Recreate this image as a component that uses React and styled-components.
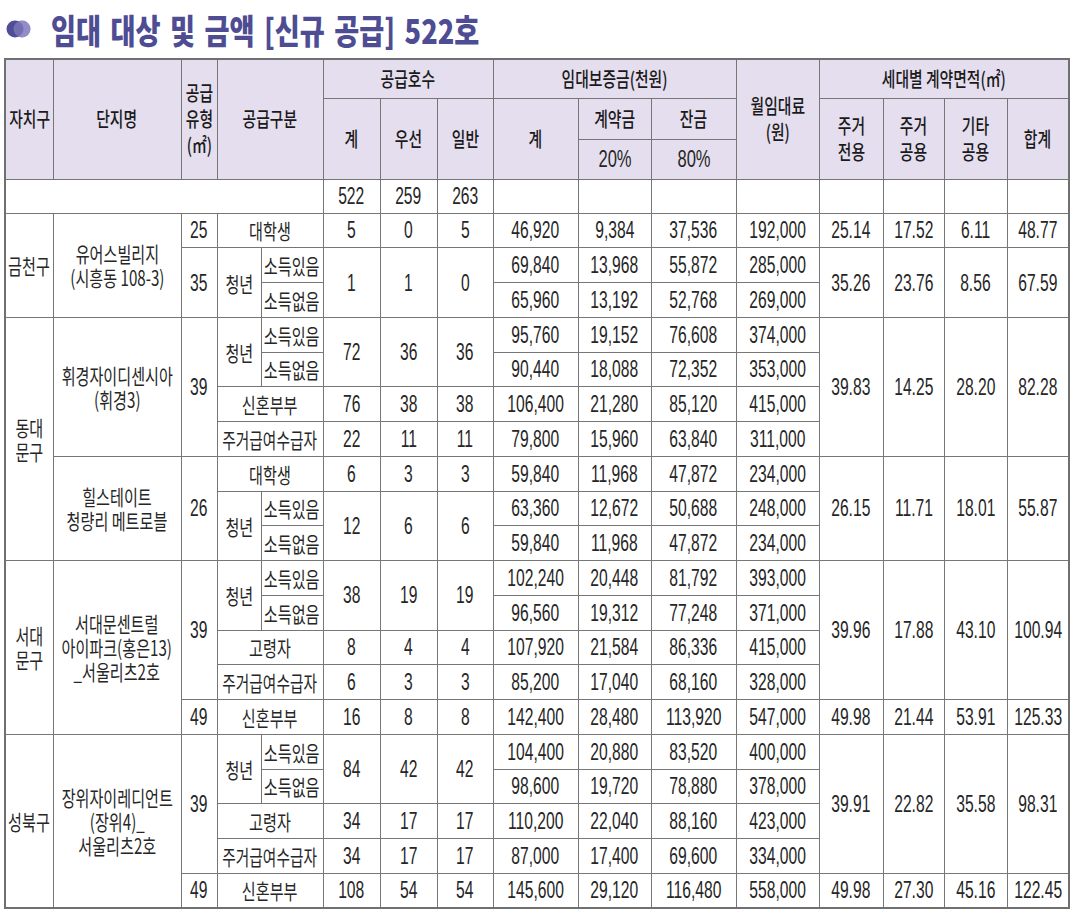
import React from 'react'
import styled, { createGlobalStyle } from 'styled-components'

const Global = createGlobalStyle`
    body {
        margin: 0;
        background: #ffffff;
        font-family: "Liberation Sans", "Noto Sans CJK KR", sans-serif;
        color: #2a2a2a;
    }
`;

const Page = styled.div`
    width: 1074px;
    padding-bottom: 8px;
`;

const TitleBar = styled.div`
    height: 58px;
    display: flex;
    align-items: center;
    padding-left: 5px;
    gap: 18px;
`;

const TitleText = styled.span`
    display: inline-block;
    font-family: "Noto Sans CJK KR", sans-serif;
    font-size: 34px;
    font-weight: 900;
    color: #4e4c92;
    white-space: pre;
    word-spacing: 4px;
    transform: scaleX(0.8);
    transform-origin: left center;
`;

const Table = styled.table`
    margin-left: 4px;
    width: 1064px;
    table-layout: fixed;
    border-collapse: collapse;
    border: 2px solid #707070;
`;

const Row = styled.tr`
    height: ${p => p.$h}px;
`;

const Cell = styled.td`
    padding: 0;
    border: 1px solid #767676;
    text-align: center;
    vertical-align: middle;
    background: ${p => (p.$head ? '#e5deef' : '#ffffff')};
    overflow: visible;
`;

const Fit = styled.div`
    display: flex;
    justify-content: center;
    align-items: center;
`;

// the original uses a narrow gothic face, so glyphs are squeezed horizontally
const Txt = styled.span`
    display: inline-block;
    white-space: pre;
    text-align: center;
    font-family: ${p => (p.$kind === 'num' ? '"Liberation Sans", "Noto Sans CJK KR", sans-serif' : '"Noto Sans CJK KR", "Liberation Sans", sans-serif')};
    font-size: ${p => (p.$kind === 'num' ? 23 : p.$kind === 'head' ? 20 : 21)}px;
    font-weight: ${p => (p.$kind === 'head' ? 500 : 400)};
    line-height: ${p => (p.$kind === 'head' ? 26 : 24)}px;
    color: ${p => (p.$kind === 'head' ? '#1a1a1a' : '#262626')};
    transform: scaleX(${p => p.$sx || (p.$kind === 'num' ? 0.68 : 0.72)});
`;

const widths = [48, 128, 36, 44, 62, 57, 57, 56, 85, 73, 85, 83, 64, 61, 63, 62];

const hasKorean = s => /[가-힣]/.test(s);

const C = ({ t, rs, cs, head, sx }) => {
    let kind = hasKorean(t) ? 'kr' : 'num';
    if (head) kind = hasKorean(t) || t.includes('㎡') ? 'head' : 'num';
    return (
        <Cell rowSpan={rs} colSpan={cs} $head={head}>
            {t !== '' && (
                <Fit>
                    <Txt $kind={kind} $sx={sx || (head && kind === 'num' ? 0.72 : head ? 0.74 : undefined)}>{t}</Txt>
                </Fit>
            )}
        </Cell>
    )
};

const headRows = [
    { h: 39, cells: [
        { t: '자치구', rs: 3 }, { t: '단지명', rs: 3 }, { t: '공급\n유형\n(㎡)', rs: 3 },
        { t: '공급구분', rs: 3, cs: 2 }, { t: '공급호수', cs: 3 }, { t: '임대보증금(천원)', cs: 3 },
        { t: '월임대료\n(원)', rs: 3 }, { t: '세대별 계약면적(㎡)', cs: 4 },
    ] },
    { h: 41, cells: [
        { t: '계', rs: 2 }, { t: '우선', rs: 2 }, { t: '일반', rs: 2 }, { t: '계', rs: 2 },
        { t: '계약금' }, { t: '잔금' },
        { t: '주거\n전용', rs: 2 }, { t: '주거\n공용', rs: 2 }, { t: '기타\n공용', rs: 2 }, { t: '합계', rs: 2 },
    ] },
    { h: 40, cells: [{ t: '20%' }, { t: '80%' }] },
];

const totals = [{ t: '', cs: 5 }, '522', '259', '263', '', '', '', '', '', '', '', ''];

const ssu = { t: '주거급여수급자', cs: 2, sx: 0.7 };

const rows = [
    [{ t: '금천구', rs: 3 }, { t: '유어스빌리지\n(시흥동 108-3)', rs: 3 }, '25', { t: '대학생', cs: 2 }, '5', '0', '5', '46,920', '9,384', '37,536', '192,000', '25.14', '17.52', '6.11', '48.77'],
    [{ t: '35', rs: 2 }, { t: '청년', rs: 2 }, '소득있음', { t: '1', rs: 2 }, { t: '1', rs: 2 }, { t: '0', rs: 2 }, '69,840', '13,968', '55,872', '285,000', { t: '35.26', rs: 2 }, { t: '23.76', rs: 2 }, { t: '8.56', rs: 2 }, { t: '67.59', rs: 2 }],
    ['소득없음', '65,960', '13,192', '52,768', '269,000'],
    [{ t: '동대\n문구', rs: 7 }, { t: '휘경자이디센시아\n(휘경3)', rs: 4 }, { t: '39', rs: 4 }, { t: '청년', rs: 2 }, '소득있음', { t: '72', rs: 2 }, { t: '36', rs: 2 }, { t: '36', rs: 2 }, '95,760', '19,152', '76,608', '374,000', { t: '39.83', rs: 4 }, { t: '14.25', rs: 4 }, { t: '28.20', rs: 4 }, { t: '82.28', rs: 4 }],
    ['소득없음', '90,440', '18,088', '72,352', '353,000'],
    [{ t: '신혼부부', cs: 2 }, '76', '38', '38', '106,400', '21,280', '85,120', '415,000'],
    [ssu, '22', '11', '11', '79,800', '15,960', '63,840', '311,000'],
    [{ t: '힐스테이트\n청량리 메트로블', rs: 3 }, { t: '26', rs: 3 }, { t: '대학생', cs: 2 }, '6', '3', '3', '59,840', '11,968', '47,872', '234,000', { t: '26.15', rs: 3 }, { t: '11.71', rs: 3 }, { t: '18.01', rs: 3 }, { t: '55.87', rs: 3 }],
    [{ t: '청년', rs: 2 }, '소득있음', { t: '12', rs: 2 }, { t: '6', rs: 2 }, { t: '6', rs: 2 }, '63,360', '12,672', '50,688', '248,000'],
    ['소득없음', '59,840', '11,968', '47,872', '234,000'],
    [{ t: '서대\n문구', rs: 5 }, { t: '서대문센트럴\n아이파크(홍은13)\n_서울리츠2호', rs: 5 }, { t: '39', rs: 4 }, { t: '청년', rs: 2 }, '소득있음', { t: '38', rs: 2 }, { t: '19', rs: 2 }, { t: '19', rs: 2 }, '102,240', '20,448', '81,792', '393,000', { t: '39.96', rs: 4 }, { t: '17.88', rs: 4 }, { t: '43.10', rs: 4 }, { t: '100.94', rs: 4 }],
    ['소득없음', '96,560', '19,312', '77,248', '371,000'],
    [{ t: '고령자', cs: 2 }, '8', '4', '4', '107,920', '21,584', '86,336', '415,000'],
    [ssu, '6', '3', '3', '85,200', '17,040', '68,160', '328,000'],
    ['49', { t: '신혼부부', cs: 2 }, '16', '8', '8', '142,400', '28,480', '113,920', '547,000', '49.98', '21.44', '53.91', '125.33'],
    [{ t: '성북구', rs: 5 }, { t: '장위자이레디언트\n(장위4)_\n서울리츠2호', rs: 5 }, { t: '39', rs: 4 }, { t: '청년', rs: 2 }, '소득있음', { t: '84', rs: 2 }, { t: '42', rs: 2 }, { t: '42', rs: 2 }, '104,400', '20,880', '83,520', '400,000', { t: '39.91', rs: 4 }, { t: '22.82', rs: 4 }, { t: '35.58', rs: 4 }, { t: '98.31', rs: 4 }],
    ['소득없음', '98,600', '19,720', '78,880', '378,000'],
    [{ t: '고령자', cs: 2 }, '34', '17', '17', '110,200', '22,040', '88,160', '423,000'],
    [ssu, '34', '17', '17', '87,000', '17,400', '69,600', '334,000'],
    ['49', { t: '신혼부부', cs: 2 }, '108', '54', '54', '145,600', '29,120', '116,480', '558,000', '49.98', '27.30', '45.16', '122.45'],
];

const norm = c => (typeof c === 'string' ? { t: c } : c);

const Bullet = () => (
    <svg width="28" height="20" viewBox="0 0 28 20">
        <circle cx="17" cy="10" r="8.5" fill="#938dc8" />
        <circle cx="10" cy="10" r="8.5" fill="#4f4d95" />
        <circle cx="17" cy="10" r="8.5" fill="#938dc8" opacity="0.55" />
    </svg>
);

export default function App() {
    return (
        <Page>
            <Global />
            <TitleBar>
                <Bullet />
                <TitleText>임대 대상 및 금액 [신규 공급] 522호</TitleText>
            </TitleBar>
            <Table>
                <colgroup>
                    {widths.map((w, i) => <col key={i} style={{ width: w }} />)}
                </colgroup>
                <thead>
                    {headRows.map((r, ri) => (
                        <Row key={`h-${ri}`} $h={r.h}>
                            {r.cells.map((c, ci) => <C key={ci} {...c} head />)}
                        </Row>
                    ))}
                </thead>
                <tbody>
                    <Row $h={34}>
                        {totals.map((c, ci) => <C key={ci} {...norm(c)} />)}
                    </Row>
                    {rows.map((r, ri) => (
                        <Row key={`r-${ri}`} $h={34.75}>
                            {r.map((c, ci) => <C key={ci} {...norm(c)} />)}
                        </Row>
                    ))}
                </tbody>
            </Table>
        </Page>
    )
}
